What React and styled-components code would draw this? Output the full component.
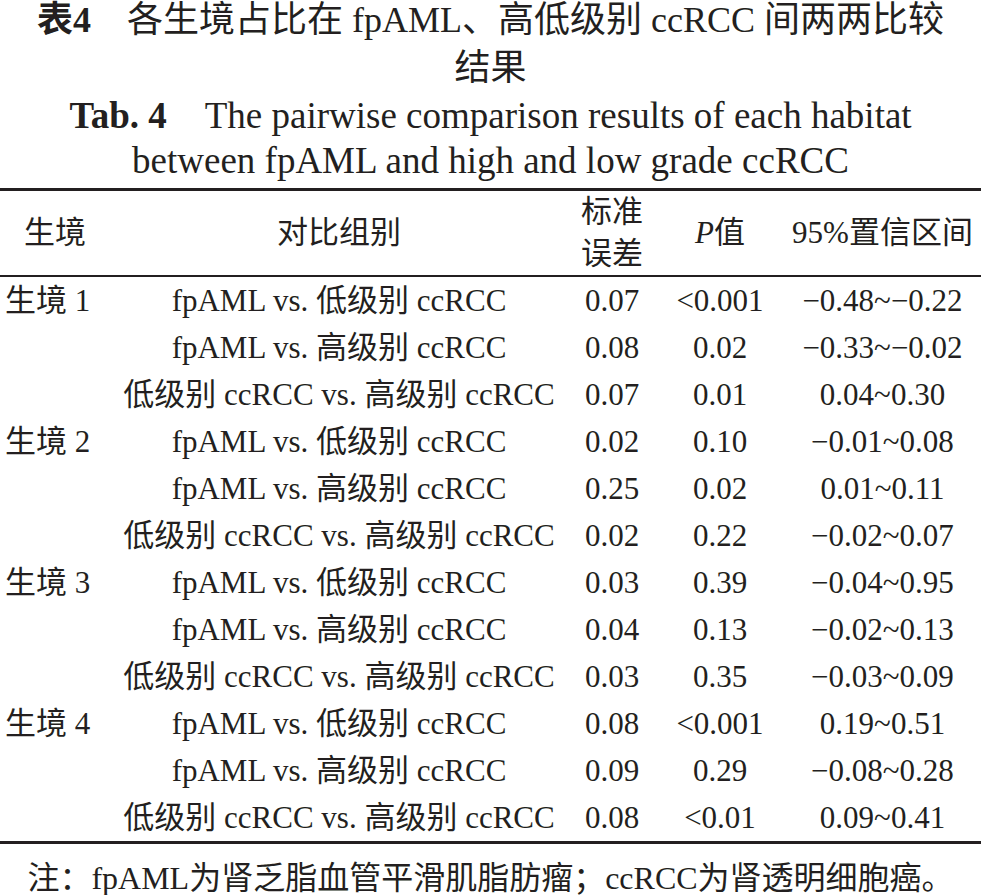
import React from 'react';
import styled, { createGlobalStyle } from 'styled-components';

const GlobalStyle = createGlobalStyle`
  html, body {
    margin: 0;
    padding: 0;
    background: #fff;
  }
  body {
    font-family: "Liberation Serif", "Noto Sans CJK SC", serif;
    color: #231f20;
  }
`;

const Page = styled.div`
  width: 981px;
  display: flex;
  flex-direction: column;
  align-items: stretch;
`;

const CaptionCn = styled.div`
  text-align: center;
  font-size: 36px;
  line-height: 48px;
  margin-top: -4px;
  white-space: nowrap;
`;

const CaptionEn = styled.div`
  text-align: center;
  font-size: 37px;
  line-height: 45px;
  margin-top: 1px;
  white-space: nowrap;
`;

const Label = styled.span`
  font-weight: 700;
  margin-right: ${({ gap }) => gap || 30}px;
`;

const Table = styled.table`
  width: 981px;
  margin-top: 5px;
  border-collapse: collapse;
  table-layout: fixed;
  font-size: 31px;
`;

const HeadRow = styled.tr`
  border-top: 3px solid #231f20;
  border-bottom: 2px solid #231f20;
  height: 84px;
`;

const Row = styled.tr`
  height: 47px;
  border-bottom: ${({ last }) => (last ? '3px solid #231f20' : 'none')};
`;

const Th = styled.th`
  font-weight: 400;
  padding: 0;
  text-align: center;
  vertical-align: middle;
  line-height: 42px;
  white-space: nowrap;
`;

const Td = styled.td`
  padding: 0 0 0 ${({ left }) => (left ? '5px' : '0')};
  text-align: ${({ left }) => (left ? 'left' : 'center')};
  vertical-align: middle;
  line-height: 47px;
  white-space: nowrap;
`;

const Note = styled.div`
  text-align: center;
  font-size: 32px;
  line-height: 40px;
  margin-top: 14px;
  white-space: nowrap;
`;

const rows = [
  ['生境 1', 'fpAML vs. 低级别 ccRCC', '0.07', '<0.001', '−0.48~−0.22'],
  ['', 'fpAML vs. 高级别 ccRCC', '0.08', '0.02', '−0.33~−0.02'],
  ['', '低级别 ccRCC vs. 高级别 ccRCC', '0.07', '0.01', '0.04~0.30'],
  ['生境 2', 'fpAML vs. 低级别 ccRCC', '0.02', '0.10', '−0.01~0.08'],
  ['', 'fpAML vs. 高级别 ccRCC', '0.25', '0.02', '0.01~0.11'],
  ['', '低级别 ccRCC vs. 高级别 ccRCC', '0.02', '0.22', '−0.02~0.07'],
  ['生境 3', 'fpAML vs. 低级别 ccRCC', '0.03', '0.39', '−0.04~0.95'],
  ['', 'fpAML vs. 高级别 ccRCC', '0.04', '0.13', '−0.02~0.13'],
  ['', '低级别 ccRCC vs. 高级别 ccRCC', '0.03', '0.35', '−0.03~0.09'],
  ['生境 4', 'fpAML vs. 低级别 ccRCC', '0.08', '<0.001', '0.19~0.51'],
  ['', 'fpAML vs. 高级别 ccRCC', '0.09', '0.29', '−0.08~0.28'],
  ['', '低级别 ccRCC vs. 高级别 ccRCC', '0.08', '<0.01', '0.09~0.41'],
];

const App = () => (
  <Page>
    <GlobalStyle />
    <CaptionCn>
      <Label gap={36}>表4</Label>各生境占比在 fpAML、高低级别 ccRCC 间两两比较
      <br />
      结果
    </CaptionCn>
    <CaptionEn>
      <Label gap={38}>Tab. 4</Label>The pairwise comparison results of each habitat
      <br />
      between fpAML and high and low grade ccRCC
    </CaptionEn>
    <Table>
      <colgroup>
        <col style={{ width: 110 }} />
        <col style={{ width: 458 }} />
        <col style={{ width: 88 }} />
        <col style={{ width: 128 }} />
        <col style={{ width: 197 }} />
      </colgroup>
      <thead>
        <HeadRow>
          <Th>生境</Th>
          <Th>对比组别</Th>
          <Th>
            标准
            <br />
            误差
          </Th>
          <Th>
            <i>P</i>值
          </Th>
          <Th>95%置信区间</Th>
        </HeadRow>
      </thead>
      <tbody>
        {rows.map((r, i) => (
          <Row key={i} last={i === rows.length - 1}>
            <Td left>{r[0]}</Td>
            <Td>{r[1]}</Td>
            <Td>{r[2]}</Td>
            <Td>{r[3]}</Td>
            <Td>{r[4]}</Td>
          </Row>
        ))}
      </tbody>
    </Table>
    <Note>注：fpAML为肾乏脂血管平滑肌脂肪瘤；ccRCC为肾透明细胞癌。</Note>
  </Page>
);

export default App;
